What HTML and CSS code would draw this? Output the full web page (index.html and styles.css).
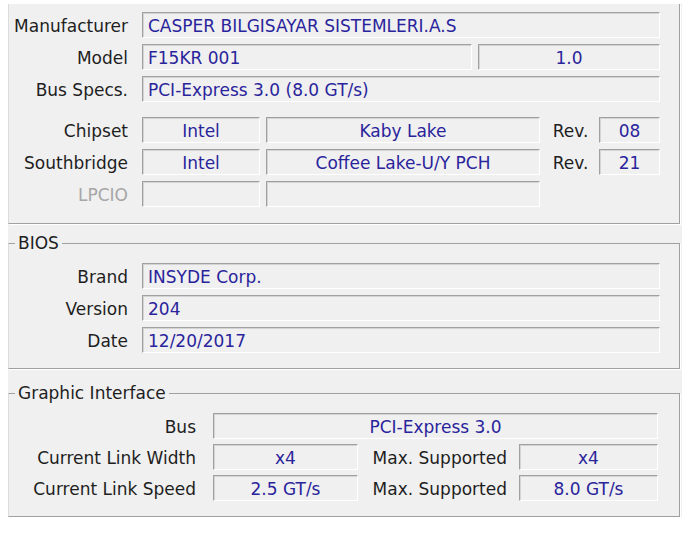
FILE: index.html
```html
<!DOCTYPE html>
<html>
  <head>
    <meta charset="UTF-8">
    <link rel="stylesheet" href="styles.css">
    <title>Mainboard</title>
  </head>
  <body>
    <div class="panel">
      <div class="group board">
        <div class="row">
          <span class="label">Manufacturer</span>
          <span class="field w-full">CASPER BILGISAYAR SISTEMLERI.A.S</span>
        </div>
        <div class="row">
          <span class="label">Model</span>
          <span class="field w-model">F15KR 001</span>
          <span class="field w-modelrev center">1.0</span>
        </div>
        <div class="row">
          <span class="label">Bus Specs.</span>
          <span class="field w-full">PCI-Express 3.0 (8.0 GT/s)</span>
        </div>

        <div class="rows chipset">
          <div class="row">
            <span class="label">Chipset</span>
            <span class="field w-vendor center">Intel</span>
            <span class="field w-name center">Kaby Lake</span>
            <span class="rev">Rev.</span>
            <span class="field w-rev center">08</span>
          </div>
          <div class="row">
            <span class="label">Southbridge</span>
            <span class="field w-vendor center">Intel</span>
            <span class="field w-name center">Coffee Lake-U/Y PCH</span>
            <span class="rev">Rev.</span>
            <span class="field w-rev center">21</span>
          </div>
          <div class="row">
            <span class="label disabled">LPCIO</span>
            <span class="field w-vendor">&nbsp;</span>
            <span class="field w-name">&nbsp;</span>
          </div>
        </div>
      </div>

      <fieldset class="group bios">
        <legend>BIOS</legend>
        <div class="row">
          <span class="label">Brand</span>
          <span class="field w-full">INSYDE Corp.</span>
        </div>
        <div class="row">
          <span class="label">Version</span>
          <span class="field w-full">204</span>
        </div>
        <div class="row">
          <span class="label">Date</span>
          <span class="field w-full">12/20/2017</span>
        </div>
      </fieldset>

      <fieldset class="group graphic">
        <legend>Graphic Interface</legend>
        <div class="row">
          <span class="label wide">Bus</span>
          <span class="field w-bus center">PCI-Express 3.0</span>
        </div>
        <div class="row">
          <span class="label wide">Current Link Width</span>
          <span class="field w-link center">x4</span>
          <span class="label max">Max. Supported</span>
          <span class="field w-max center">x4</span>
        </div>
        <div class="row">
          <span class="label wide">Current Link Speed</span>
          <span class="field w-link center">2.5 GT/s</span>
          <span class="label max">Max. Supported</span>
          <span class="field w-max center">8.0 GT/s</span>
        </div>
      </fieldset>
    </div>
  </body>
</html>
```

FILE: styles.css
```css
body {
    margin: 0;
    background-color: #ffffff;
    font-family: "DejaVu Sans", Verdana, sans-serif;
    font-size: 17px;
    color: #1e1e1e;
}

.panel {
    margin-top: 4px;
    margin-left: 8px;
    width: 674px;
    background-color: #f0f0f0;
}

.group {
    width: 672px;
    box-sizing: border-box;
    margin: 0;
    border: 1px solid #a0a0a0;
    border-left-color: #dcdcdc;
    box-shadow: 1px 1px 0 #ffffff;
    display: flex;
    flex-direction: column;
    gap: 6px;
}

.board {
    border-top: none;
    padding: 8px 0 16px 0;
}

.chipset {
    margin-top: 9px;
    display: flex;
    flex-direction: column;
    gap: 6px;
}

.bios {
    margin-top: 9px;
    padding: 9px 0 15px 0;
}

.graphic {
    margin-top: 14px;
    padding: 9px 0 15px 0;
    gap: 5px;
}

legend {
    margin-left: 6px;
    padding: 0 3px;
    line-height: 21px;
}

.row {
    display: flex;
    align-items: baseline;
}

.label {
    width: 119px;
    margin-right: 14px;
    text-align: right;
    white-space: nowrap;
}

.label.disabled {
    color: #a6a6a6;
}

.label.wide {
    width: 187px;
    margin-right: 17px;
}

.label.max {
    width: 149px;
    margin-right: 12px;
}

.rev {
    width: 59px;
    text-align: center;
    padding-left: 2px;
    box-sizing: border-box;
}

.field {
    height: 26px;
    box-sizing: border-box;
    padding: 3px 0 0 5px;
    line-height: 21px;
    border-top: 1px solid #a0a0a0;
    border-left: 1px solid #a0a0a0;
    border-bottom: 1px solid #ffffff;
    border-right: 1px solid #ffffff;
    box-shadow: inset 1px 1px 0 #d4d4d4;
    color: #2a249c;
    white-space: nowrap;
    overflow: hidden;
}

.field.center {
    padding-left: 0;
    text-align: center;
}

.w-full { width: 518px; }
.w-model { width: 330px; margin-right: 6px; }
.w-modelrev { width: 182px; }
.w-vendor { width: 118px; margin-right: 6px; }
.w-name { width: 274px; }
.w-rev { width: 61px; }
.w-bus { width: 445px; }
.w-link { width: 145px; }
.w-max { width: 139px; }
```
